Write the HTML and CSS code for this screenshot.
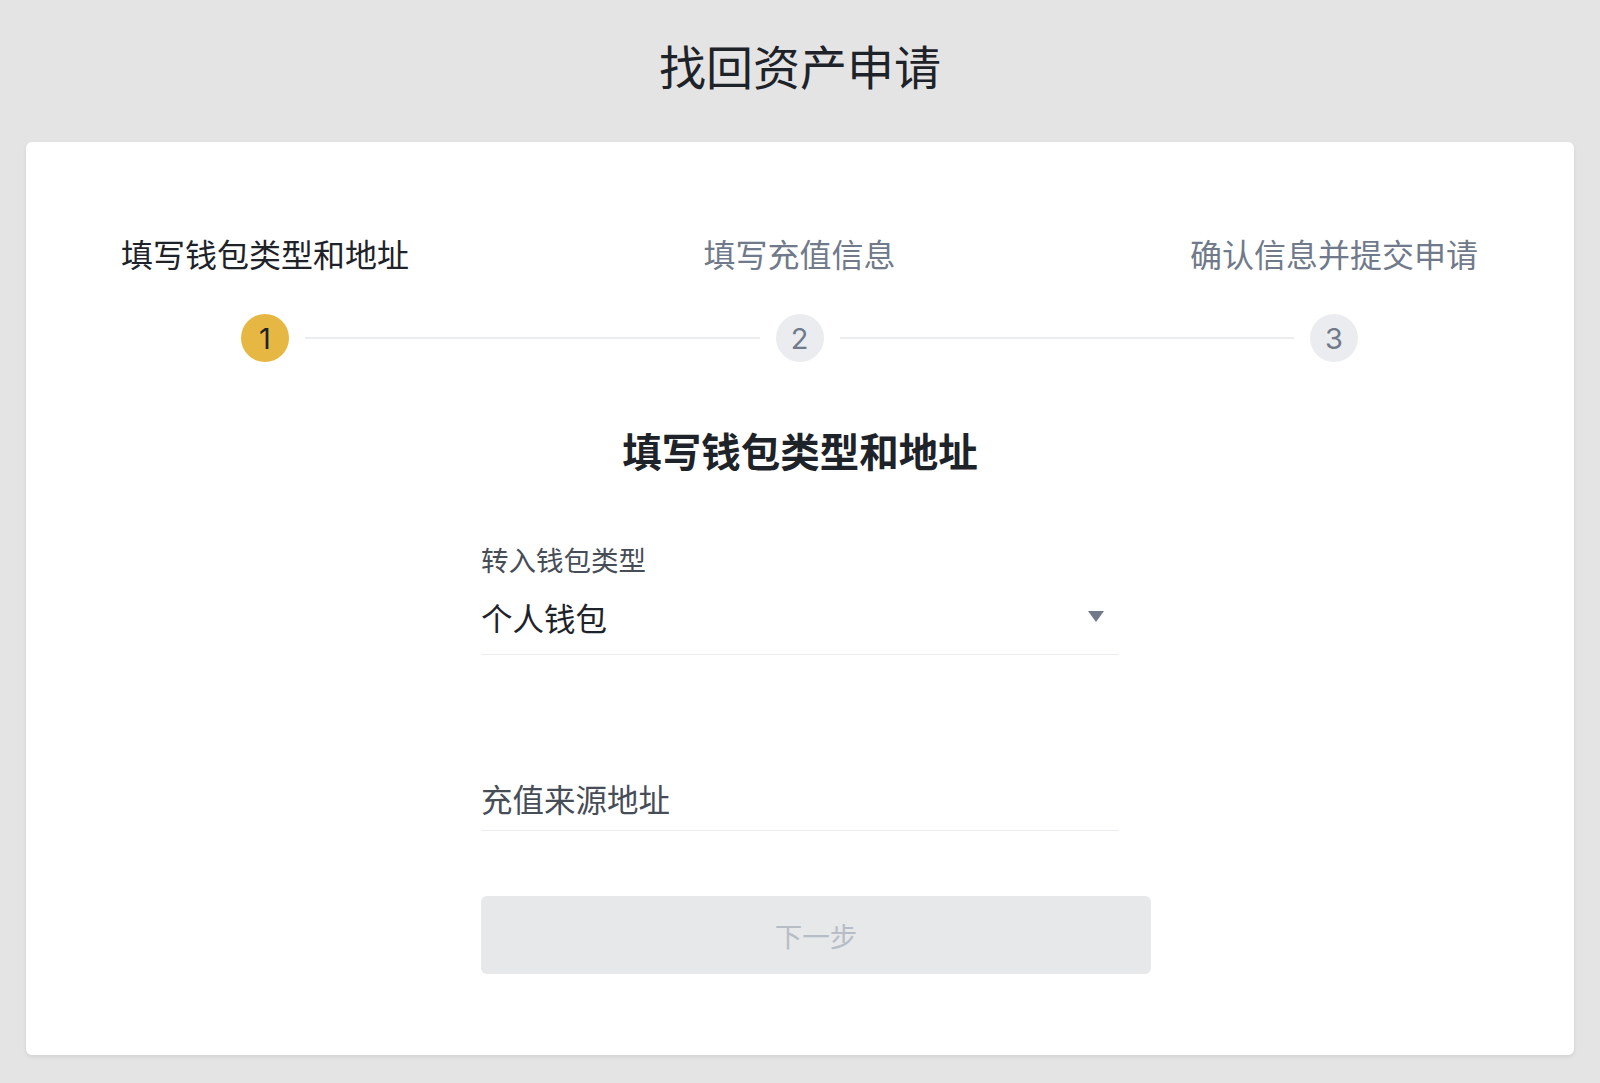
FILE: index.html
```html
<!DOCTYPE html>
<html lang="zh-CN">
<head>
<meta charset="utf-8">
<title>找回资产申请</title>
<link rel="stylesheet" href="styles.css">
</head>
<body>
<div class="page">
  <h1 class="page-title">找回资产申请</h1>
  <div class="card">
    <div class="step-titles">
      <div class="step-title active">填写钱包类型和地址</div>
      <div class="step-title">填写充值信息</div>
      <div class="step-title">确认信息并提交申请</div>
    </div>
    <div class="step-track">
      <div class="step-dot active">1</div>
      <div class="step-line"></div>
      <div class="step-dot">2</div>
      <div class="step-line"></div>
      <div class="step-dot">3</div>
    </div>
    <h2 class="section-title">填写钱包类型和地址</h2>
    <form class="form">
      <div class="field-label">转入钱包类型</div>
      <div class="select">
        <span class="select-value">个人钱包</span>
        <svg class="caret" width="16" height="11" viewBox="0 0 16 11"><path d="M0 0H16L8 11Z" fill="#707a8a"/></svg>
      </div>
      <div class="address">
        <span class="placeholder">充值来源地址</span>
      </div>
      <div class="btn">下一步</div>
    </form>
  </div>
</div>
</body>
</html>
```
FILE: styles.css
```css
* { box-sizing: border-box; }
html, body { margin: 0; padding: 0; }
body {
  background: #e4e4e4;
  font-family: "Noto Sans CJK SC", "Noto Sans", sans-serif;
  color: #1e2329;
}
.page {
  padding: 33px 26px 29px;
}
.page-title {
  margin: 0;
  text-align: center;
  font-size: 47px;
  line-height: 64px;
  font-weight: 400;
  color: #1e2329;
}
.card {
  margin-top: 45px;
  background: #fff;
  border-radius: 6px;
  box-shadow: 0 2px 4px rgba(0, 0, 0, 0.08);
  padding: 87px 0 80px;
  height: 913px;
}
.step-titles {
  display: flex;
  justify-content: space-between;
  padding: 0 96px 0 95px;
}
.step-title {
  font-size: 32px;
  line-height: 48px;
  color: #707a8a;
}
.step-title.active { color: #1e2329; }
.step-track {
  margin-top: 37px;
  display: flex;
  align-items: center;
  padding: 0 216px 0 215px;
}
.step-dot {
  width: 48px;
  height: 48px;
  border-radius: 50%;
  background: #eaecef;
  color: #707a8a;
  display: flex;
  align-items: center;
  justify-content: center;
  font-family: "Inter", "Roboto", sans-serif;
  font-size: 29px;
  flex: none;
}
.step-dot.active {
  background: #e6b742;
  color: #1e2329;
}
.step-line {
  flex: 1;
  height: 2px;
  margin: 0 16px;
  background: #eaecef;
}
.section-title {
  margin: 60px 0 0;
  text-align: center;
  font-size: 39.5px;
  line-height: 56px;
  font-weight: 700;
  color: #1e2329;
}
.form {
  width: 638px;
  margin: 61px auto 0;
}
.field-label {
  font-size: 27.5px;
  line-height: 40px;
  color: #474d57;
}
.select {
  margin-top: 14px;
  display: flex;
  align-items: center;
  justify-content: space-between;
  border-bottom: 1px solid #eaecef;
  padding: 0 15px 13px 0;
}
.select-value {
  font-size: 31.5px;
  line-height: 48px;
  color: #1e2329;
}
.caret { margin-top: -2px; }
.address {
  margin-top: 119px;
  border-bottom: 1px solid #eaecef;
  padding-bottom: 8px;
}
.placeholder {
  display: block;
  font-size: 31.5px;
  line-height: 48px;
  color: #474d57;
}
.btn {
  margin-top: 65px;
  width: 670px;
  height: 78px;
  border-radius: 6px;
  background: #e6e8ea;
  color: #b7bdc6;
  font-size: 27.5px;
  display: flex;
  align-items: center;
  justify-content: center;
}
```
